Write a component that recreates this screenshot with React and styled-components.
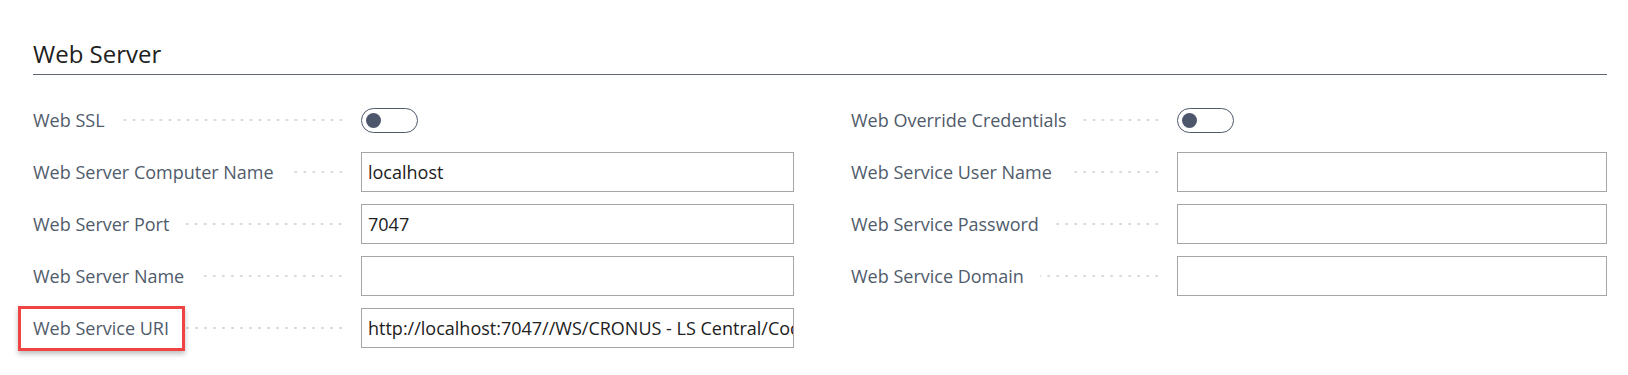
import styled, { createGlobalStyle } from 'styled-components';

const GlobalStyle = createGlobalStyle`
    body {
        margin: 0;
        background: #ffffff;
        font-family: "Open Sans", "Noto Sans", sans-serif;
    }
`;

const Page = styled.div`
    min-height: 375px;
    box-sizing: border-box;
    padding: 38px 21px 0 33px;
`;

const SectionTitle = styled.h2`
    margin: 0;
    padding-bottom: 4px;
    font-size: 24px;
    font-weight: 400;
    line-height: 32px;
    color: #212121;
    border-bottom: 1px solid #5f6873;
`;

const Columns = styled.div`
    display: grid;
    grid-template-columns: 761px 756px;
    column-gap: 57px;
    margin-top: 25px;
`;

const Column = styled.div`
    display: flex;
    flex-direction: column;
    gap: 12px;
`;

const Row = styled.div`
    display: grid;
    grid-template-columns: ${({ $labelWidth }) => $labelWidth}px 1fr;
    align-items: center;
    height: 40px;
`;

const LabelCell = styled.div`
    display: flex;
    align-items: center;
    padding-right: 16px;
    min-width: 0;
`;

const Label = styled.span`
    position: relative;
    flex-shrink: 0;
    font-size: 18px;
    line-height: 20px;
    color: #505b6b;
    white-space: nowrap;

    ${({ $highlight }) =>
        $highlight &&
        `
        &::after {
            content: '';
            position: absolute;
            left: -15px;
            right: -16px;
            top: -12px;
            bottom: -13px;
            border: 3px solid #f04444;
            box-shadow: 0 3px 5px rgba(0, 0, 0, 0.25);
        }
    `}
`;

const Dots = styled.span`
    flex: 1;
    height: 4px;
    margin-left: 16px;
    background-image: radial-gradient(circle, #d0d2d6 1px, transparent 1.3px);
    background-size: 9px 4px;
    background-position: right center;
`;

const TextField = styled.div`
    box-sizing: border-box;
    height: 40px;
    border: 1px solid #a6a6a6;
    padding: 0 6px;
    display: flex;
    align-items: center;
    font-size: 18px;
    color: #212121;
    white-space: nowrap;
    overflow: hidden;
`;

const Toggle = styled.div`
    box-sizing: border-box;
    width: 57px;
    height: 25px;
    border: 1px solid #505b6b;
    border-radius: 13px;
    display: flex;
    align-items: center;
    padding-left: 4px;
`;

const Knob = styled.span`
    width: 15px;
    height: 15px;
    border-radius: 50%;
    background: #4d566a;
`;

const Field = ({ label, labelWidth, highlight, children }) => (
    <Row $labelWidth={labelWidth}>
        <LabelCell>
            <Label $highlight={highlight}>{label}</Label>
            <Dots />
        </LabelCell>
        {children}
    </Row>
);

const left = [
    { label: 'Web SSL', toggle: true },
    { label: 'Web Server Computer Name', value: 'localhost' },
    { label: 'Web Server Port', value: '7047' },
    { label: 'Web Server Name', value: '' },
    { label: 'Web Service URI', value: 'http://localhost:7047//WS/CRONUS - LS Central/Codeunit', highlight: true },
];

const right = [
    { label: 'Web Override Credentials', toggle: true },
    { label: 'Web Service User Name', value: '' },
    { label: 'Web Service Password', value: '' },
    { label: 'Web Service Domain', value: '' },
];

const renderField = (labelWidth) => (f) => (
    <Field key={f.label} label={f.label} labelWidth={labelWidth} highlight={f.highlight}>
        {f.toggle ? (
            <Toggle>
                <Knob />
            </Toggle>
        ) : (
            <TextField>{f.value}</TextField>
        )}
    </Field>
);

const App = () => {
    return (
        <>
            <GlobalStyle />
            <Page>
                <SectionTitle>Web Server</SectionTitle>
                <Columns>
                    <Column>{left.map(renderField(328))}</Column>
                    <Column>{right.map(renderField(326))}</Column>
                </Columns>
            </Page>
        </>
    );
};

export default App;
